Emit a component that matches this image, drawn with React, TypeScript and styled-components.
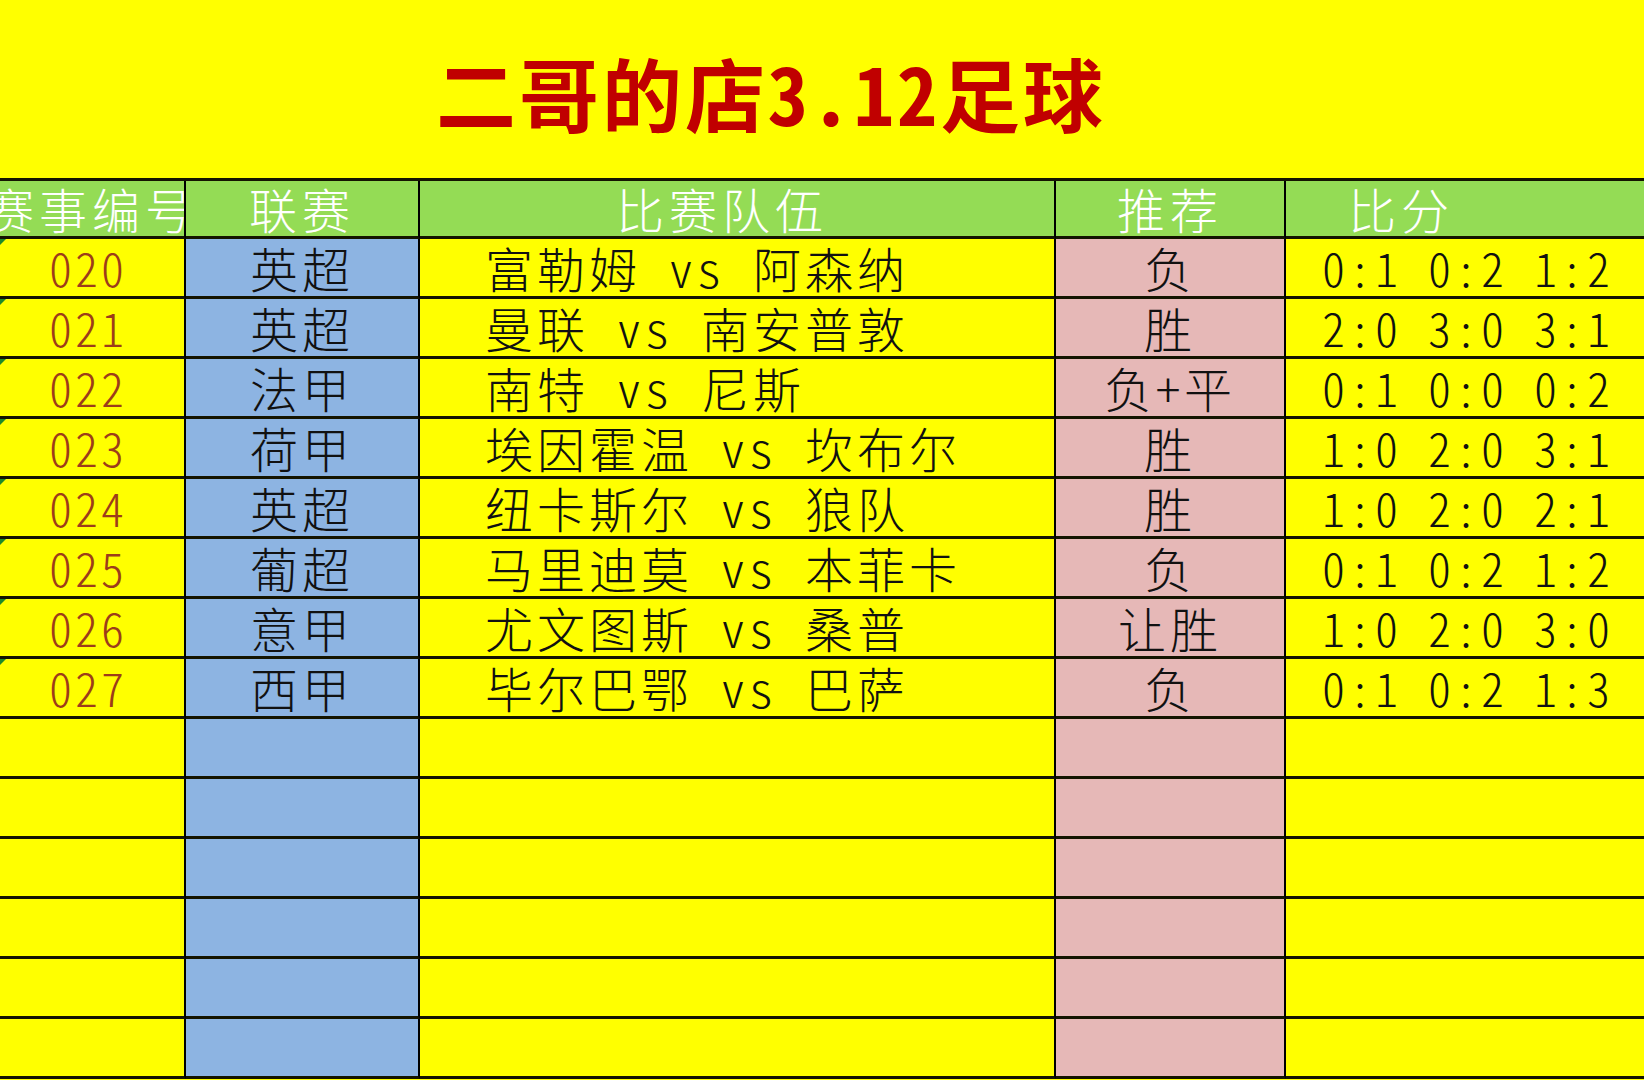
import { createGlobalStyle, styled } from 'styled-components';

const GlobalStyle = createGlobalStyle`
  html, body {
    margin: 0;
    padding: 0;
    background: #ffff00;
  }
  * {
    box-sizing: border-box;
  }
`;

const FONT = `"Noto Sans CJK SC", "Noto Sans", sans-serif`;

const tones = {
  yellow: '#ffff00',
  blue: '#8db4e2',
  pink: '#e6b8b7',
  green: '#94dc55',
};

type Tone = keyof typeof tones;

const columns = [
  { title: '赛事编号', tone: 'yellow' as Tone, pad: 0, shift: 0 },
  { title: '联赛', tone: 'blue' as Tone, pad: 0, shift: 0 },
  { title: '比赛队伍', tone: 'yellow' as Tone, pad: 0, shift: 30 },
  { title: '推荐', tone: 'pink' as Tone, pad: 0, shift: 0 },
  { title: '比分', tone: 'yellow' as Tone, pad: 62, shift: 0 },
];

const matches = [
  { no: '020', league: '英超', teams: '富勒姆 vs 阿森纳', pick: '负', score: '0:1 0:2 1:2' },
  { no: '021', league: '英超', teams: '曼联 vs 南安普敦', pick: '胜', score: '2:0 3:0 3:1' },
  { no: '022', league: '法甲', teams: '南特 vs 尼斯', pick: '负+平', score: '0:1 0:0 0:2' },
  { no: '023', league: '荷甲', teams: '埃因霍温 vs 坎布尔', pick: '胜', score: '1:0 2:0 3:1' },
  { no: '024', league: '英超', teams: '纽卡斯尔 vs 狼队', pick: '胜', score: '1:0 2:0 2:1' },
  { no: '025', league: '葡超', teams: '马里迪莫 vs 本菲卡', pick: '负', score: '0:1 0:2 1:2' },
  { no: '026', league: '意甲', teams: '尤文图斯 vs 桑普', pick: '让胜', score: '1:0 2:0 3:0' },
  { no: '027', league: '西甲', teams: '毕尔巴鄂 vs 巴萨', pick: '负', score: '0:1 0:2 1:3' },
];

const EMPTY_ROWS = 6;

export default function App() {
  return (
    <>
      <GlobalStyle />
      <Page>
        <TitleBar>
          <Title>二哥的店3.12足球</Title>
        </TitleBar>
        <Sheet>
          {columns.map((col, i) => (
            <HeadCell
              key={col.title}
              $last={i === columns.length - 1}
              $pad={col.pad}
              $shift={col.shift}
            >
              {col.title}
            </HeadCell>
          ))}
          {matches.map((m) => (
            <Row key={m.no}>
              <Cell $tone="yellow">
                <ErrorMark />
                <MatchNo>{m.no}</MatchNo>
              </Cell>
              <Cell $tone="blue">{m.league}</Cell>
              <Cell $tone="yellow" $pad={65}>
                {m.teams}
              </Cell>
              <Cell $tone="pink">{m.pick}</Cell>
              <Cell $tone="yellow" $pad={36} $last>
                <Score>{m.score}</Score>
              </Cell>
            </Row>
          ))}
          {Array.from({ length: EMPTY_ROWS }, (_, r) => (
            <Row key={`empty-${r}`}>
              {columns.map((col, i) => (
                <Cell key={col.title} $tone={col.tone} $last={i === columns.length - 1} />
              ))}
            </Row>
          ))}
        </Sheet>
      </Page>
    </>
  );
}

const Page = styled.div`
  width: 1644px;
  height: 1080px;
  overflow: hidden;
  background: #ffff00;
  display: flex;
  flex-direction: column;
  font-family: ${FONT};
`;

const TitleBar = styled.div`
  height: 178px;
  display: flex;
  align-items: center;
  padding: 4px 0 0 436px;
`;

const Title = styled.h1`
  margin: 0;
  font-size: 80px;
  font-weight: 700;
  line-height: 1.2;
  color: #c00000;
  letter-spacing: 3px;
  white-space: nowrap;
  font-feature-settings: 'hwid';
`;

const Sheet = styled.div`
  display: grid;
  grid-template-columns: 186px 234px 636px 230px 358px;
  grid-template-rows: 58px;
  grid-auto-rows: 60px;
  border-top: 3px solid #151500;
`;

const Row = styled.div`
  display: contents;
`;

const Cell = styled.div<{ $tone: Tone; $pad?: number; $last?: boolean }>`
  position: relative;
  display: flex;
  align-items: center;
  justify-content: ${({ $pad }) => ($pad ? 'flex-start' : 'center')};
  padding-left: ${({ $pad }) => $pad ?? 0}px;
  background: ${({ $tone }) => tones[$tone]};
  border-right: ${({ $last }) => ($last ? 'none' : '2px solid #000')};
  border-bottom: 3px solid #141400;
  font-size: 48px;
  font-weight: 300;
  line-height: 1.12;
  color: #111;
  letter-spacing: 4px;
  white-space: pre;
  overflow: hidden;
  font-feature-settings: 'hwid';
`;

const HeadCell = styled.div<{ $pad: number; $shift: number; $last: boolean }>`
  display: flex;
  align-items: center;
  justify-content: ${({ $pad }) => ($pad ? 'flex-start' : 'center')};
  padding-left: ${({ $pad }) => $pad}px;
  padding-right: ${({ $shift }) => $shift}px;
  background: ${tones.green};
  border-right: ${({ $last }) => ($last ? 'none' : '2px solid #000')};
  border-bottom: 3px solid #141400;
  font-size: 48px;
  font-weight: 300;
  line-height: 1.1;
  color: #ffffff;
  letter-spacing: 5px;
  white-space: nowrap;
  overflow: hidden;
`;

const ErrorMark = styled.span`
  position: absolute;
  top: 0;
  left: 0;
  width: 0;
  height: 0;
  border-top: 6px solid #1f8a2a;
  border-right: 6px solid transparent;
`;

const MatchNo = styled.span`
  color: #9c3c1a;
  font-size: 46px;
  letter-spacing: 3px;
  margin-right: 8px;
`;

const Score = styled.span`
  font-size: 46px;
  letter-spacing: 3.5px;
  color: #111;
`;
